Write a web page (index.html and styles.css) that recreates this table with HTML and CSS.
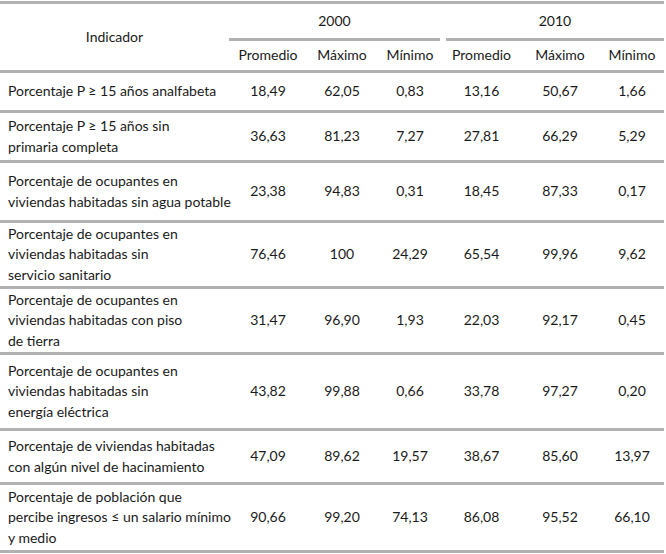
FILE: index.html
```html
<!DOCTYPE html>
<html lang="es">
<head>
<meta charset="utf-8">
<title>Indicadores 2000 y 2010</title>
<link rel="stylesheet" href="styles.css">
</head>
<body>
<table class="data">
  <colgroup>
    <col class="c-ind"><col class="c1"><col class="c2"><col class="c3"><col class="c4"><col class="c5"><col class="c6">
  </colgroup>
  <thead>
    <tr class="years">
      <th rowspan="2" class="ind-head">Indicador</th>
      <th colspan="3" class="year"><div class="year-label first">2000</div></th>
      <th colspan="3" class="year"><div class="year-label second">2010</div></th>
    </tr>
    <tr class="cols">
      <th>Promedio</th><th>Máximo</th><th>Mínimo</th>
      <th>Promedio</th><th>Máximo</th><th>Mínimo</th>
    </tr>
  </thead>
  <tbody>
    <tr class="r1">
      <td class="ind">Porcentaje P ≥ 15 años analfabeta</td>
      <td>18,49</td><td>62,05</td><td>0,83</td><td>13,16</td><td>50,67</td><td>1,66</td>
    </tr>
    <tr class="r2">
      <td class="ind">Porcentaje P ≥ 15 años sin<br>primaria completa</td>
      <td>36,63</td><td>81,23</td><td>7,27</td><td>27,81</td><td>66,29</td><td>5,29</td>
    </tr>
    <tr class="r3">
      <td class="ind">Porcentaje de ocupantes en<br>viviendas habitadas sin agua potable</td>
      <td>23,38</td><td>94,83</td><td>0,31</td><td>18,45</td><td>87,33</td><td>0,17</td>
    </tr>
    <tr class="r4">
      <td class="ind">Porcentaje de ocupantes en<br>viviendas habitadas sin<br>servicio sanitario</td>
      <td>76,46</td><td>100</td><td>24,29</td><td>65,54</td><td>99,96</td><td>9,62</td>
    </tr>
    <tr class="r5">
      <td class="ind">Porcentaje de ocupantes en<br>viviendas habitadas con piso<br>de tierra</td>
      <td>31,47</td><td>96,90</td><td>1,93</td><td>22,03</td><td>92,17</td><td>0,45</td>
    </tr>
    <tr class="r6">
      <td class="ind">Porcentaje de ocupantes en<br>viviendas habitadas sin<br>energía eléctrica</td>
      <td>43,82</td><td>99,88</td><td>0,66</td><td>33,78</td><td>97,27</td><td>0,20</td>
    </tr>
    <tr class="r7">
      <td class="ind">Porcentaje de viviendas habitadas<br>con algún nivel de hacinamiento</td>
      <td>47,09</td><td>89,62</td><td>19,57</td><td>38,67</td><td>85,60</td><td>13,97</td>
    </tr>
    <tr class="r8">
      <td class="ind">Porcentaje de población que<br>percibe ingresos ≤ un salario mínimo<br>y medio</td>
      <td>90,66</td><td>99,20</td><td>74,13</td><td>86,08</td><td>95,52</td><td>66,10</td>
    </tr>
  </tbody>
</table>
</body>
</html>
```

FILE: styles.css
```css
html, body {
  margin: 0;
  padding: 0;
  background: #ffffff;
}

body {
  font-family: Lato, "Liberation Sans", sans-serif;
  font-size: 14px;
  color: #1a1a1a;
}

.data {
  width: 664px;
  margin-top: 1px;
  border-collapse: collapse;
  table-layout: fixed;
  border-top: 3px solid #b2b2b2;
}

.c-ind { width: 229px; }
.c1 { width: 78px; }
.c2 { width: 70px; }
.c3 { width: 66px; }
.c4 { width: 77px; }
.c5 { width: 80px; }
.c6 { width: 64px; }

th, td {
  padding: 0;
  font-weight: normal;
  text-align: center;
  vertical-align: middle;
  line-height: 20.5px;
  white-space: nowrap;
}

.ind-head {
  border-bottom: 3px solid #b2b2b2;
}

.years th.year {
  height: 37px;
  vertical-align: top;
}

.year-label {
  height: 34px;
  line-height: 34px;
  border-bottom: 3px solid #b2b2b2;
}

.year-label.first { margin-right: 3px; }
.year-label.second { margin-left: 3px; }

.cols th {
  height: 29px;
  border-bottom: 3px solid #b2b2b2;
}

tbody td {
  border-bottom: 3px solid #b2b2b2;
}

td.ind {
  text-align: left;
  padding-left: 8px;
}

.r1 td { height: 37px; }
.r2 td { height: 47px; }
.r3 td { height: 57px; }
.r4 td { height: 63px; }
.r5 td { height: 63px; }
.r6 td { height: 73px; }
.r7 td { height: 51px; }
.r8 td { height: 65px; }
```
